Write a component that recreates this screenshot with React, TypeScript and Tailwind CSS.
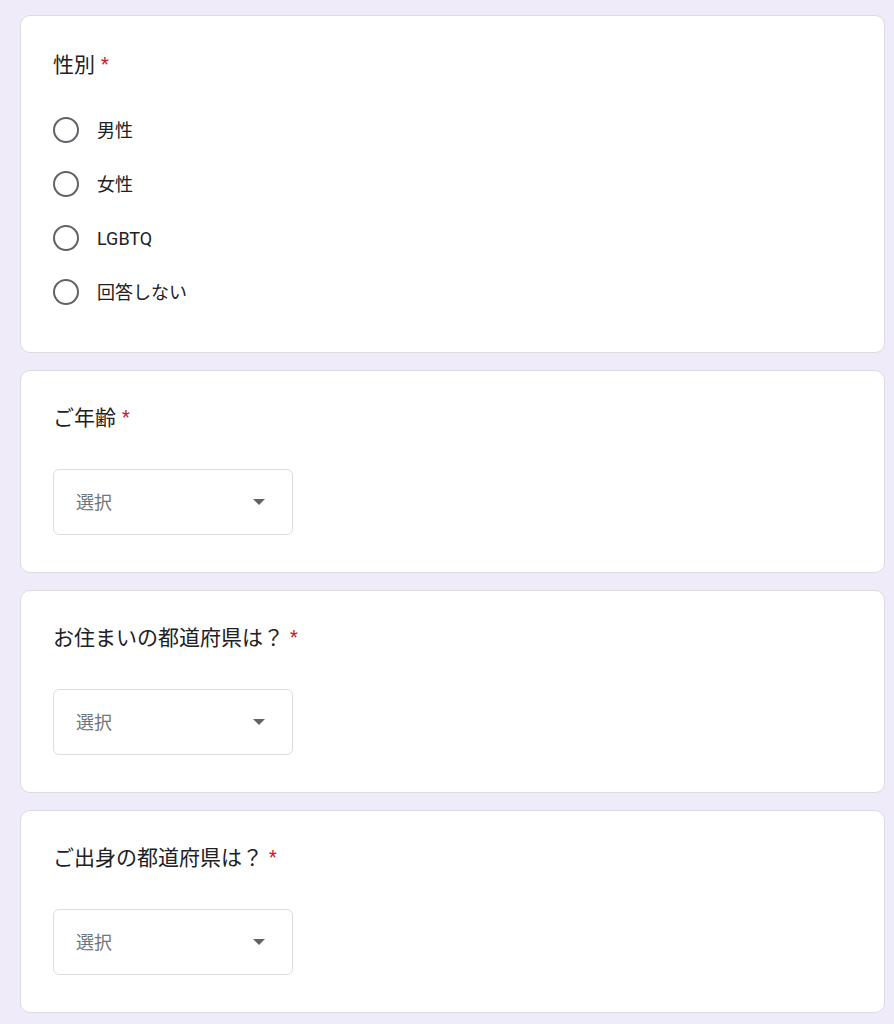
import React from "react"

const font = { fontFamily: '"Roboto", "Noto Sans CJK JP", sans-serif' }

const genderOptions = ["男性", "女性", "LGBTQ", "回答しない"]

const selectQuestions = ["ご年齢", "お住まいの都道府県は？", "ご出身の都道府県は？"]

function Title({ text }: { text: string }) {
  return (
    <div className="flex h-[24px] items-center text-[21px] leading-[24px] text-[#202124]">
      <span>{text}</span>
      <span className="ml-[6px] -mt-[3px] text-[18px] text-[#c5221f]">*</span>
    </div>
  )
}

function Card({ children, className }: { children: React.ReactNode; className?: string }) {
  return (
    <div
      className={
        "rounded-[10px] border border-[#dadce0] bg-white px-[32px] " + (className ?? "")
      }
    >
      {children}
    </div>
  )
}

function SelectBox() {
  return (
    <div className="mt-[39px] flex h-[66px] w-[240px] items-center justify-between rounded-[6px] border border-[#dadce0] pl-[22px] pr-[27px]">
      <span className="text-[18px] text-[#70757a]">選択</span>
      <svg width="12" height="6" viewBox="0 0 12 6">
        <path d="M0 0h12L6 6z" fill="#5f6368" />
      </svg>
    </div>
  )
}

export default function App() {
  return (
    <div className="min-h-[1024px] w-full bg-[#f0ebf8] pt-[15px]" style={font}>
      <div className="ml-[20px] flex w-[865px] flex-col gap-[17px]">
        <Card className="pt-[37px] pb-[33px]">
          <Title text="性別" />
          <div className="mt-[26px] flex flex-col">
            {genderOptions.map((label) => (
              <div key={label} className="flex h-[54px] items-center">
                <div className="h-[26px] w-[26px] rounded-full border-[2.5px] border-[#5f6368]" />
                <span className="ml-[18px] text-[18px] text-[#202124]">{label}</span>
              </div>
            ))}
          </div>
        </Card>
        {selectQuestions.map((q) => (
          <Card key={q} className="pt-[35px] pb-[37px]">
            <Title text={q} />
            <SelectBox />
          </Card>
        ))}
      </div>
    </div>
  )
}
